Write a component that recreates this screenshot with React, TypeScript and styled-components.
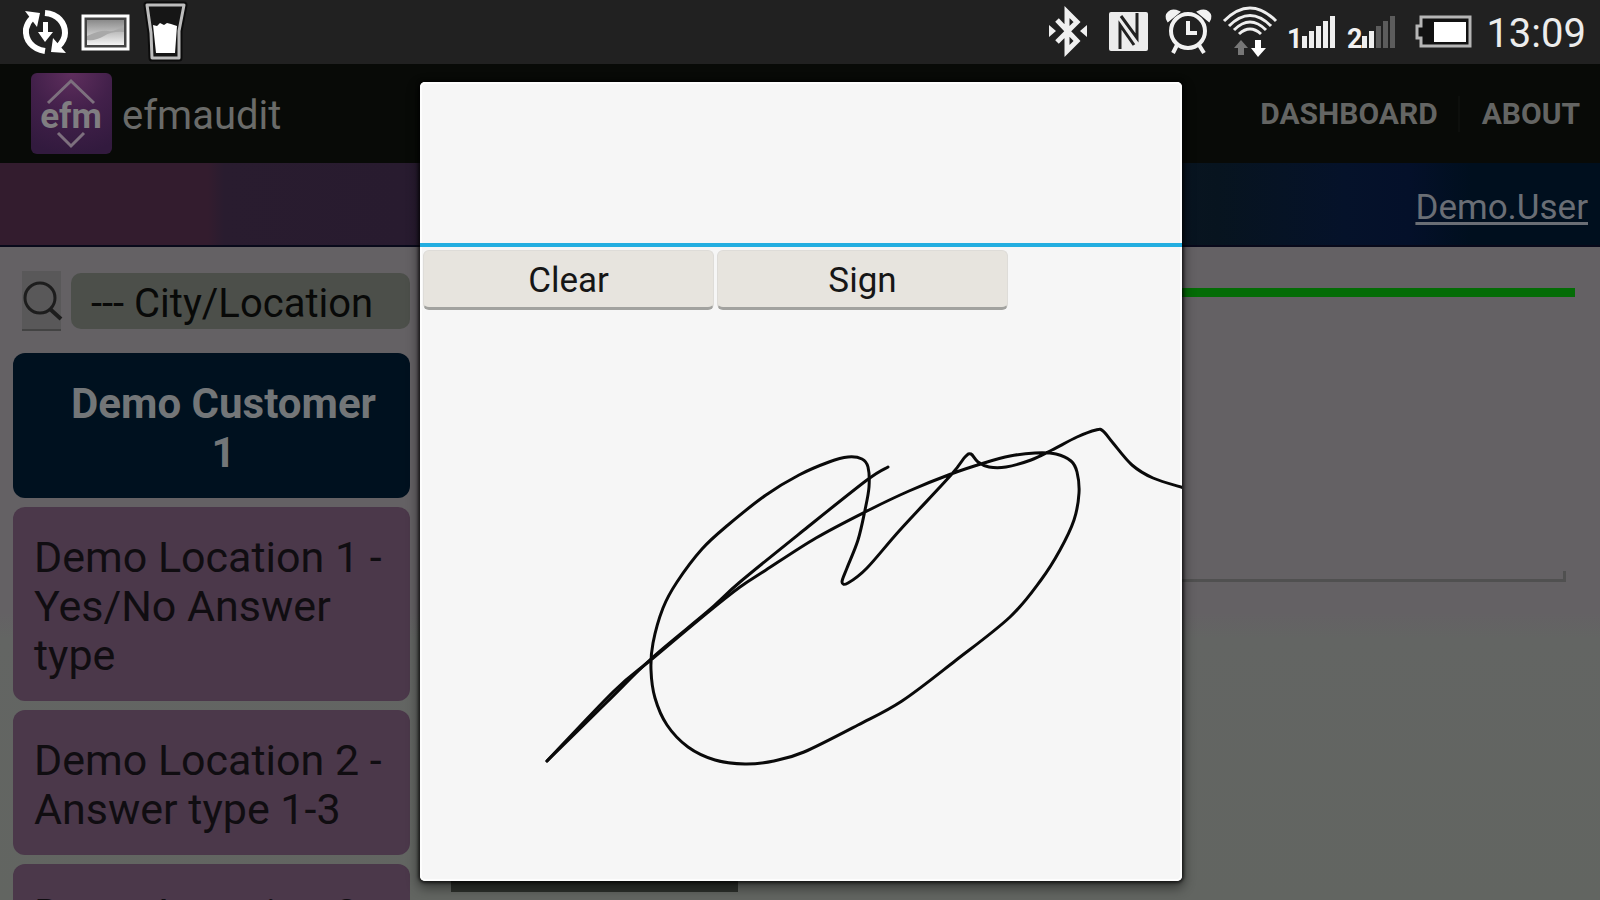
import React from "react";
import styled, { createGlobalStyle } from "styled-components";

const GlobalStyle = createGlobalStyle`
  * { box-sizing: border-box; }
  body {
    margin: 0;
    background: #646164;
    font-family: Roboto, "Liberation Sans", sans-serif;
  }
  button, select, textarea { font-family: inherit; margin: 0; }
`;

const Screen = styled.div`
  display: flex;
  flex-direction: column;
  height: 100vh;
  overflow: hidden;
`;

const StatusBar = styled.div`
  flex: none;
  display: flex;
  justify-content: space-between;
  height: 64px;
  padding: 0 14px 0 16px;
  background: #212121;
`;

const StatusGroup = styled.div`
  display: flex;
  align-items: center;
`;

const StatusIcon = styled.svg<{ $wide?: boolean }>`
  display: block;
  width: ${(p) => (p.$wide ? 78 : 60)}px;
  height: 64px;
  overflow: visible;
`;

const Clock = styled.time`
  margin-left: 10px;
  padding-top: 4px;
  font-size: 40px;
  line-height: 48px;
  color: #ececec;
`;

const AppArea = styled.div`
  position: relative;
  flex: 1;
  min-height: 0;
  display: flex;
  flex-direction: column;
  overflow: hidden;
`;

const ActionBar = styled.header`
  flex: none;
  display: flex;
  align-items: center;
  justify-content: space-between;
  height: 99px;
  padding: 0 20px 0 31px;
  background: #080a07;
`;

const Brand = styled.div`
  display: flex;
  align-items: center;
  gap: 10px;
  color: #6a6b69;
`;

const BrandName = styled.span`
  padding-top: 4px;
  font-size: 40px;
  line-height: 48px;
`;

const Logo = styled.svg`
  display: block;
  width: 81px;
  height: 81px;
`;

const Nav = styled.nav`
  display: flex;
  align-items: center;
`;

const NavLink = styled.a`
  font-size: 30px;
  line-height: 36px;
  font-weight: 700;
  color: #646563;
  text-decoration: none;

  & + & {
    margin-left: 20px;
    padding-left: 22px;
    border-left: 2px solid #0d0f0c;
  }
`;

const UserBar = styled.div`
  flex: none;
  display: flex;
  align-items: center;
  justify-content: flex-end;
  height: 84px;
  padding: 8px 12px 0;
  border-bottom: 2px solid #08091a;
  background: linear-gradient(
    90deg,
    #331c2e 0,
    #331c2e 13%,
    #291c2f 14%,
    #281b2f 25%,
    #12182b 60%,
    #07141f 76%,
    #05122a 84%,
    #04102a 88%,
    #000f1e 92%
  );
`;

const UserLink = styled.a`
  font-size: 35px;
  line-height: 40px;
  color: #6a6e75;
  text-decoration: underline;
  text-decoration-thickness: 3px;
  text-underline-offset: 3px;
`;

const Content = styled.div`
  flex: 1;
  min-height: 0;
  display: flex;
  gap: 30px;
  overflow: hidden;
  background: linear-gradient(180deg, #646164 0, #646164 56%, #636563 60%, #626561 100%);
`;

const Sidebar = styled.aside`
  flex: none;
  display: flex;
  flex-direction: column;
  gap: 9px;
  width: 410px;
  padding: 24px 0 0 13px;
`;

const SearchRow = styled.form`
  display: flex;
  align-items: center;
  gap: 10px;
  padding-left: 9px;
  margin-bottom: 13px;
`;

const SearchButton = styled.button`
  flex: none;
  width: 39px;
  height: 60px;
  padding: 0;
  border: 0;
  border-bottom: 2px solid #434343;
  background: #595859;
`;

const SearchGlyph = styled.svg`
  display: block;
  width: 39px;
  height: 56px;
  overflow: visible;
`;

const LocationSelect = styled.select`
  flex: 1;
  min-width: 0;
  height: 56px;
  padding: 6px 20px 0;
  border: 0;
  border-radius: 10px;
  appearance: none;
  background: #4c4f4a;
  color: #080908;
  font-size: 40px;
  line-height: 48px;
`;

const Entry = styled.button<{ $heading?: boolean }>`
  flex: none;
  padding: ${(p) => (p.$heading ? "26px 22px 21px 46px" : "26px 20px 21px 21px")};
  border: 0;
  border-radius: 12px;
  background: ${(p) => (p.$heading ? "#00111f" : "#4b384a")};
  color: ${(p) => (p.$heading ? "#737678" : "#100d11")};
  font-size: ${(p) => (p.$heading ? 42 : 43)}px;
  line-height: 49px;
  font-weight: ${(p) => (p.$heading ? 700 : 400)};
  text-align: ${(p) => (p.$heading ? "center" : "left")};
`;

const Report = styled.main`
  flex: 1;
  min-width: 0;
  display: flex;
  flex-direction: column;
  align-items: flex-start;
  padding: 41px 25px 0 0;
`;

const Progress = styled.div`
  flex: none;
  width: 100%;
  height: 9px;
  background: #046c06;
`;

const Remarks = styled.textarea`
  flex: none;
  width: calc(100% - 9px);
  height: 245px;
  margin-top: 40px;
  border: 0;
  border-bottom: 3px solid #505050;
  background: linear-gradient(#505050, #505050) right bottom / 3px 8px no-repeat;
  resize: none;
`;

const SubmitButton = styled.button`
  flex: none;
  width: 287px;
  height: 60px;
  margin: 250px 0 0 11px;
  border: 0;
  background: #2c2f2b;
`;

const Backdrop = styled.div`
  position: absolute;
  inset: 0;
  display: flex;
  justify-content: center;
  padding: 18px 0 19px 2px;
`;

const Dialog = styled.section`
  display: flex;
  flex-direction: column;
  width: 762px;
  max-width: 100%;
  border-radius: 5px;
  background: #f6f6f6;
  box-shadow: inset 0 0 0 2px #fdfdfd, 0 0 3px 2px rgba(0, 0, 0, 0.6),
    0 5px 12px 2px rgba(0, 0, 0, 0.45);
  overflow: hidden;
`;

const DialogTitle = styled.header`
  flex: none;
  height: 165px;
  border-bottom: 4px solid #23aee0;
`;

const DialogActions = styled.div`
  flex: none;
  display: flex;
  gap: 3px;
  padding: 3px 3px 0;
`;

const DialogButton = styled.button`
  width: 291px;
  height: 60px;
  padding: 4px 0 0;
  border: 1px solid #dedcd8;
  border-bottom: 3px solid #a2a29f;
  border-radius: 6px;
  background: #e7e4de;
  color: #161616;
  font-size: 35px;
  line-height: 40px;
`;

const SignaturePad = styled.svg`
  display: block;
  flex: 1;
  min-height: 0;
  width: 100%;
`;

type Point = [number, number];

const crossStroke: Point[] = [
  [888, 467], [867, 480], [804, 530], [740, 582], [707, 612], [652, 658], [606, 703], [547, 761],
];

const loopStroke: Point[] = [
  [547, 761], [614, 691], [652, 659], [707, 613], [740, 587], [766, 570], [816, 538],
  [867, 511], [909, 491], [951, 474], [984, 463], [1010, 456], [1035, 453], [1056, 454],
  [1071, 461], [1077, 472], [1079, 493], [1074, 520], [1060, 550], [1041, 580],
  [1010, 617], [955, 661], [902, 701], [858, 725], [804, 752], [774, 761], [745, 764],
  [715, 760], [688, 747], [667, 725], [655, 698], [651, 670], [653, 643], [663, 608],
  [677, 582], [702, 549], [728, 525], [766, 495], [799, 475], [829, 462], [848, 457],
  [862, 459], [868, 467], [869, 487], [865, 510], [858, 540], [847, 568], [842, 582],
  [848, 583], [867, 568], [900, 530], [951, 475], [965, 457], [971, 454], [978, 462],
  [989, 467], [1006, 467], [1031, 460], [1052, 450], [1077, 437], [1096, 430],
  [1103, 431], [1113, 443], [1132, 465], [1153, 478], [1184, 488],
];

// Joins the sampled points with a Catmull-Rom curve.
function smoothPath(points: Point[]): string {
  let d = `M${points[0][0]} ${points[0][1]}`;
  for (let i = 0; i < points.length - 1; i++) {
    const a = points[Math.max(i - 1, 0)];
    const b = points[i];
    const c = points[i + 1];
    const e = points[Math.min(i + 2, points.length - 1)];
    d += `C${b[0] + (c[0] - a[0]) / 6} ${b[1] + (c[1] - a[1]) / 6} ${c[0] - (e[0] - b[0]) / 6} ${c[1] - (e[1] - b[1]) / 6} ${c[0]} ${c[1]}`;
  }
  return d;
}

const SyncIcon = () => (
  <StatusIcon viewBox="16 0 60 64" aria-label="Syncing">
    <g fill="none" stroke="#fff" strokeWidth="6">
      <path d="M45 51C32 49 25 40 26 29C27 24 29 21 32 18" />
      <path d="M45 13C58 14 65 23 65 33C65 39 62 43 58 47" />
    </g>
    <path fill="#fff" d="M25 11L40 13L37 27ZM66 53L51 52L53 38Z" />
    <path fill="#fff" d="M43 22H48V32H53L45 42L38 32H43Z" />
  </StatusIcon>
);

const PictureIcon = () => (
  <StatusIcon viewBox="76 0 60 64" aria-label="Screenshot saved">
    <defs>
      <linearGradient id="photo" x1="0" y1="0" x2="0" y2="1">
        <stop offset="0" stopColor="#8a8a8a" />
        <stop offset="1" stopColor="#f4f4f4" />
      </linearGradient>
    </defs>
    <rect x="83" y="16" width="45" height="33" fill="#444" stroke="#fff" strokeWidth="3" />
    <rect x="87" y="20" width="37" height="25" fill="url(#photo)" />
    <path d="M87 36Q100 30 108 31T124 25V32Q112 31 104 36T87 40Z" fill="#a8a8a8" />
  </StatusIcon>
);

const GlassIcon = () => (
  <StatusIcon viewBox="136 0 60 64" aria-label="Drink reminder">
    <path d="M147 5H184L179 31V58H152L151 33Z" fill="#161616" stroke="#0c0c0c" strokeWidth="7" strokeLinejoin="round" />
    <path d="M147 5H184L179 31V58H152L151 33Z" fill="#161616" stroke="#bdbdbd" strokeWidth="3" strokeLinejoin="round" />
    <path d="M153 25L157 26L160 23L164 25L167 23L171 24L177 26L175 53H156Z" fill="#fff" />
  </StatusIcon>
);

const BluetoothIcon = () => (
  <StatusIcon viewBox="1037 0 60 64" aria-label="Bluetooth connected">
    <path d="M1056 20L1076 41L1066 51V12L1076 22L1056 42" fill="none" stroke="#f0f0f0" strokeWidth="5" />
    <path d="M1048 25L1055 31L1048 37ZM1086 25L1079 31L1086 37Z" fill="#f0f0f0" />
  </StatusIcon>
);

const NfcIcon = () => (
  <StatusIcon viewBox="1097 0 60 64" aria-label="NFC on">
    <rect x="1108" y="12" width="39" height="39" rx="2" fill="#ececec" />
    <path d="M1119 49V25L1133 45M1136 13V38L1120 16" fill="none" stroke="#212121" strokeWidth="3" />
  </StatusIcon>
);

const AlarmIcon = () => (
  <StatusIcon viewBox="1157 0 60 64" aria-label="Alarm set">
    <g fill="none" stroke="#f2f2f2" strokeWidth="4">
      <circle cx="1187" cy="31" r="17" />
      <path d="M1187 21V33H1196" />
      <path d="M1176 45L1172 53M1198 45L1203 53" />
    </g>
    <path d="M1167 21C1163 14 1169 8 1178 12ZM1208 21C1212 14 1206 8 1197 12Z" fill="#f2f2f2" stroke="#f2f2f2" strokeWidth="2" />
  </StatusIcon>
);

const WifiIcon = () => (
  <StatusIcon viewBox="1217 0 60 64" aria-label="Wi-Fi connected">
    <g fill="none" stroke="#efefef" strokeWidth="3">
      <path d="M1223 21Q1249 -5 1275 21" />
      <path d="M1228 26Q1249 5 1270 26" />
      <path d="M1233 30Q1249 14 1265 30" />
      <path d="M1238 34Q1249 24 1260 34" />
    </g>
    <path d="M1240 40L1247 48H1243V55H1237V48H1233Z" fill="#777" />
    <path d="M1254 40H1260V48H1265L1257 57L1250 48H1254Z" fill="#fff" />
  </StatusIcon>
);

interface SignalProps {
  sim: number;
  level: number;
}

const SignalIcon = ({ sim, level }: SignalProps) => (
  <StatusIcon viewBox="-12 0 60 64" aria-label={`SIM ${sim} signal`}>
    <text x="-3" y="48" fill="#f2f2f2" fontSize="27" fontWeight="700" fontFamily="Roboto, sans-serif">
      {sim}
    </text>
    {[0, 1, 2, 3, 4].map((i) => (
      <rect
        key={i}
        x={12 + i * 7}
        y={[36, 31, 26, 21, 16][i]}
        width="5"
        height={[12, 17, 22, 27, 32][i]}
        fill={i < level ? "#efefef" : "#5c5c5c"}
      />
    ))}
  </StatusIcon>
);

const BatteryIcon = () => (
  <StatusIcon $wide viewBox="1399 0 78 64" aria-label="Battery">
    <path d="M1422 17H1471V46H1422V38H1418V26H1422Z" fill="#111" stroke="#b5b5b5" strokeWidth="3" />
    <rect x="1435" y="22" width="32" height="20" fill="#fff" />
  </StatusIcon>
);

const EfmLogo = () => (
  <Logo viewBox="0 0 81 81" aria-label="efm">
    <defs>
      <radialGradient id="tile" cx=".5" cy="0" r="1">
        <stop offset="0" stopColor="#5e2e5d" />
        <stop offset=".5" stopColor="#42204a" />
        <stop offset="1" stopColor="#321a3e" />
      </radialGradient>
    </defs>
    <rect width="81" height="81" rx="6" fill="url(#tile)" />
    <path d="M17 30L40 8L63 30M27 60L40 73L53 60" fill="none" stroke="#7d707e" strokeWidth="3" />
    <text x="40" y="55" textAnchor="middle" fill="#807e81" fontSize="35" fontWeight="700" fontFamily="Roboto, sans-serif">
      efm
    </text>
  </Logo>
);

export default function App() {
  return (
    <Screen>
      <GlobalStyle />
      <StatusBar>
        <StatusGroup>
          <SyncIcon />
          <PictureIcon />
          <GlassIcon />
        </StatusGroup>
        <StatusGroup>
          <BluetoothIcon />
          <NfcIcon />
          <AlarmIcon />
          <WifiIcon />
          <SignalIcon sim={1} level={5} />
          <SignalIcon sim={2} level={2} />
          <BatteryIcon />
          <Clock>13:09</Clock>
        </StatusGroup>
      </StatusBar>

      <AppArea>
        <ActionBar>
          <Brand>
            <EfmLogo />
            <BrandName>efmaudit</BrandName>
          </Brand>
          <Nav>
            <NavLink href="#dashboard">DASHBOARD</NavLink>
            <NavLink href="#about">ABOUT</NavLink>
          </Nav>
        </ActionBar>
        <UserBar>
          <UserLink href="#user">Demo.User</UserLink>
        </UserBar>
        <Content>
          <Sidebar>
            <SearchRow>
              <SearchButton type="button" aria-label="Search">
                <SearchGlyph viewBox="0 0 39 56">
                  <circle cx="18" cy="26" r="15" fill="none" stroke="#1d1d1d" strokeWidth="3" />
                  <path d="M28 37L39 47" stroke="#1d1d1d" strokeWidth="4" />
                </SearchGlyph>
              </SearchButton>
              <LocationSelect aria-label="City or location">
                <option>--- City/Location</option>
              </LocationSelect>
            </SearchRow>
            <Entry $heading>Demo Customer 1</Entry>
            <Entry>Demo Location 1 - Yes/No Answer type</Entry>
            <Entry>Demo Location 2 - Answer type 1-3</Entry>
            <Entry>Demo Location 3 -</Entry>
          </Sidebar>
          <Report>
            <Progress />
            <Remarks aria-label="Remarks" />
            <SubmitButton type="button" aria-label="Submit" />
          </Report>
        </Content>

        <Backdrop>
          <Dialog role="dialog" aria-modal="true" aria-label="Signature">
            <DialogTitle />
            <DialogActions>
              <DialogButton type="button">Clear</DialogButton>
              <DialogButton type="button">Sign</DialogButton>
            </DialogActions>
            <SignaturePad viewBox="420 310 762 571" aria-label="Signature drawing">
              <g fill="none" stroke="#0a0a0a" strokeWidth="3" strokeLinecap="round" strokeLinejoin="round">
                <path d={smoothPath(crossStroke)} />
                <path d={smoothPath(loopStroke)} />
              </g>
            </SignaturePad>
          </Dialog>
        </Backdrop>
      </AppArea>
    </Screen>
  );
}
